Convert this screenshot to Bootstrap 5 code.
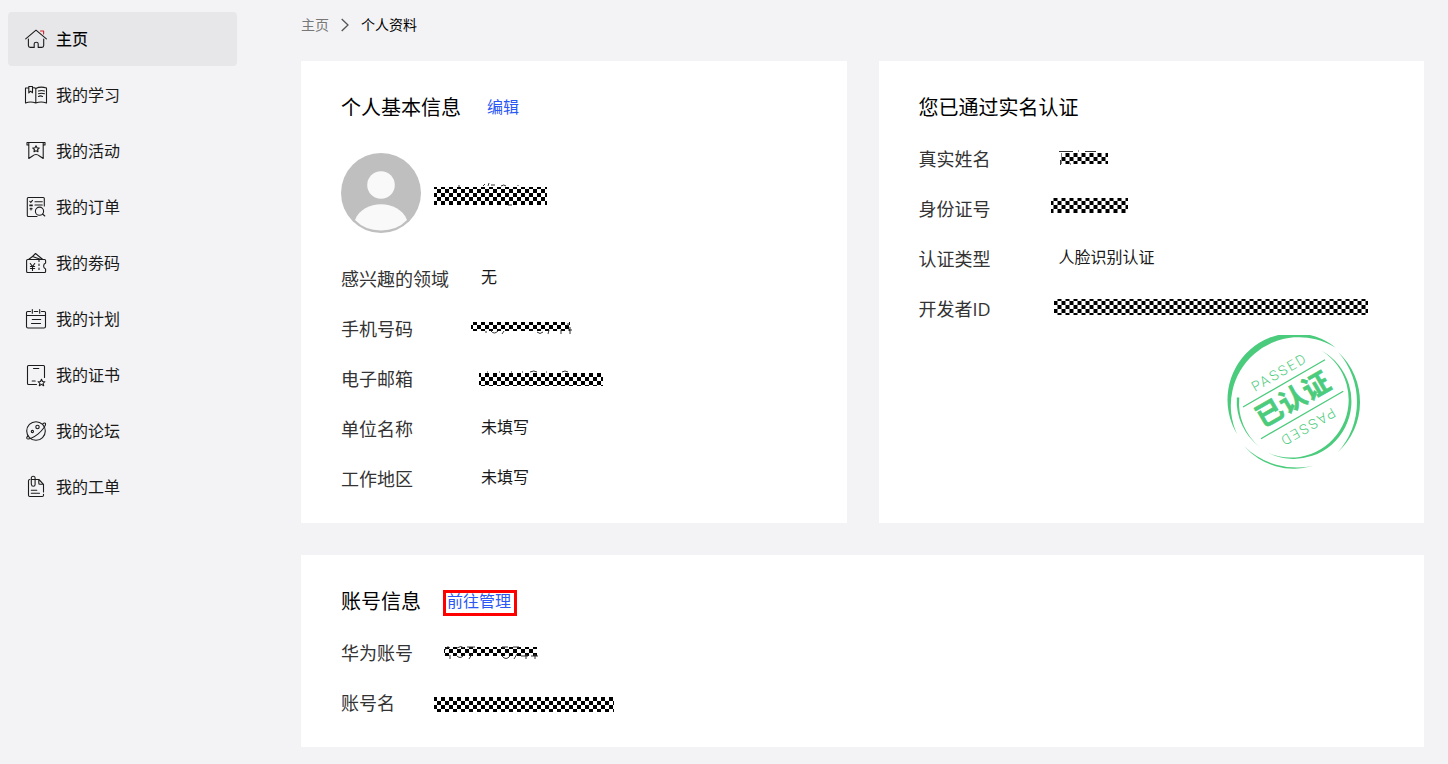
<!DOCTYPE html>
<html lang="zh-CN">
<head>
<meta charset="utf-8">
<meta name="viewport" content="width=device-width, initial-scale=1">
<title>个人资料</title>
<link href="https://cdn.jsdelivr.net/npm/bootstrap@5.3.0/dist/css/bootstrap.min.css" rel="stylesheet">
<style>
body{background:#f3f3f5;color:#000;font-family:"Open Sans","Noto Sans CJK SC",sans-serif;font-size:16px;line-height:24px}
a{text-decoration:none}
.side-menu{width:229px;margin-left:8px;padding-top:12px}
.side-menu .nav{gap:2px}
.side-menu .nav-link{height:54px;padding:0 16px;gap:8px;color:#191919;border-radius:4px}
.side-menu .nav-link.active{background:#e7e7e9;color:#000;-webkit-text-stroke:.15px #000}
.side-menu svg{width:24px;height:24px;fill:none;stroke:#1c1c1c;stroke-width:1.1;stroke-linejoin:round;stroke-linecap:round;flex:none}
.content-area{margin-left:64px;padding:13px 24px 16px 0}
.crumbs{font-size:14px;gap:12px;margin-bottom:24px}
.crumbs a{color:#777}
.crumbs svg{width:8px;height:14px;fill:none;stroke:#555;stroke-width:1.3}
.panels{--bs-gutter-x:32px;--bs-gutter-y:32px}
.panel{height:100%;background:#fff;padding:30px 40px 19px}
.panel h2{font-family:"Noto Sans CJK SC",sans-serif;font-size:20px;line-height:32px;font-weight:400;margin:0}
.panel a{color:#2b57f5}
.panel-head{gap:26px}
.boxed-link{border:3px solid #f00;line-height:16px;padding:0 3px 4px 1px;margin:4px 0 0 -4px}
.profile{gap:13px;margin:30px 0 21px}
.profile svg.face{width:80px;height:80px}
.info{margin:11px 0 0}
.profile + .info{margin-top:0}
.info-row{height:50px}
.info-row dt{width:140px;font-size:18px;font-weight:400;color:#333}
.info-row dd{margin:0;height:26px;line-height:22px;color:#191919}
.narrow .info-row dt{width:106px}
/* checkered covers laid over private values */
.cover{position:absolute;background:repeating-conic-gradient(#fff 0 25%,#000 0 50%) 1px 1px/8px 8px fixed}
.cover svg{position:absolute;left:0;top:-5px;width:100%;height:26px;overflow:visible;fill:none;stroke:#333;stroke-width:1}
.cover-nick{left:0;top:34px;width:113px;height:18px}
.cover-phone{left:-10px;top:6px;width:99px;height:9px}
.cover-mail{left:-2px;top:7px;width:124px;height:13px}
.cover-real{left:2px;top:7px;width:47px;height:11px}
.cover-id{left:-8px;top:2px;width:77px;height:15px}
.cover-dev{left:-5px;top:3px;width:314px;height:16px}
.cover-account{left:-3px;top:7px;width:93px;height:9px}
.cover-login{left:-13px;top:7px;width:180px;height:15px}
.nick{width:113px;height:80px}
.stamp{width:134px;height:134px;margin:1px 23px 0 auto;display:block;fill:#4bcb7c}
.stamp .seal-line{stroke:#4bcb7c;stroke-width:1.3}
.stamp .seal-name{font-size:27px;font-weight:700;text-anchor:middle;stroke:#4bcb7c;stroke-width:.6}
.stamp .seal-word{font-family:Roboto,sans-serif;font-size:14px;font-weight:300;letter-spacing:2px;text-anchor:middle}
</style>
</head>
<body>
<div class="d-flex">
<aside class="side-menu flex-shrink-0">
<nav class="nav flex-column" aria-label="个人中心">
<a class="nav-link active d-flex align-items-center" href="#"><svg viewBox="0 0 24 24"><path d="M1.7 11.8 12 3.2l10.4 8.6M4.4 12v6.6q0 1.8 1.8 1.8h4v-3.6q0-1.5 2-1.5t2 1.5v3.6h3.7q1.8 0 1.8-1.8V12"/><path d="M16.5 4h3.1v3" stroke="#d3222d"/></svg>主页</a>
<a class="nav-link d-flex align-items-center" href="#"><svg viewBox="0 0 24 24"><path d="M4.700 5H1.500v15q5-2 10.300 0 5.200-2 10.700 0V5q-6-2-10.700.5V20M8.600 4.500q2 0 3.200 1M4.800 3.500h3.700v6.300L6.600 8.200 4.800 9.800zM14.500 8q3-1 6 0M14.500 10.700q3-1 6 0M14.500 13.400q2-1 4 0"/></svg>我的学习</a>
<a class="nav-link d-flex align-items-center" href="#"><svg viewBox="0 0 24 24"><path d="M4.500 6H3V3.500h18V6h-1.500M4.800 4v15.500L8.500 17q3.500-3 7 0l3.700 2.500V4M12 6.700l1 2 2.200.3-1.600 1.500.4 2.200-2-1-2 1 .4-2.200L8.800 9l2.200-.3z"/></svg>我的活动</a>
<a class="nav-link d-flex align-items-center" href="#"><svg viewBox="0 0 24 24"><path d="M20.300 11V3.500q0-1-1-1h-15q-1 0-1 1v17q0 1 1 1H13M5.800 6.300l1 1 1.700-2M5.800 10h2.500M5.800 10.800h2.500M6 13.800h2.200M7 13v2M11 6.700h7.300M11 10h7.300M18.500 19l2.300 2"/><circle cx="15.500" cy="16.200" r="4.100"/></svg>我的订单</a>
<a class="nav-link d-flex align-items-center" href="#"><svg viewBox="0 0 24 24"><path d="M21.600 12V9.500q0-1-1-1h-17q-1 0-1 1v11q0 1 1 1h17q1 0 1-1V18q-2-.7-2-3t2-3M4.500 8.500l4-3 8.500 3M8.500 5.500l3-3 7 5.700M6.300 12.500l2.200 3 2.200-3M8.500 15.500v4M6.400 15.500h4.200M6.400 17.500h4.200"/><path d="M15 9v12" stroke-dasharray="1.500 2.500"/></svg>我的劵码</a>
<a class="nav-link d-flex align-items-center" href="#"><svg viewBox="0 0 24 24"><path d="M4.500 4.500h-1q-1 0-1 1v14q0 1.500 1.500 1.500h16q1.500 0 1.500-1.500v-14q0-1-1-1h-1M2.500 8.500h19M8.300 2.500v3.700M15.700 2.500v3.700M10.300 4.500h3.400M4.500 4.500h2M17.500 4.500h2M8.300 12.500h8.400M7.500 16.500h9"/></svg>我的计划</a>
<a class="nav-link d-flex align-items-center" href="#"><svg viewBox="0 0 24 24"><path d="M12.500 21.500h-8q-1 0-1-1v-17q0-1 1-1h15q1 0 1 1v11M9.500 5.500h5.300M8.200 18h3M17.500 16.300l1 2.200 2.400.2-1.800 1.600.6 2.400-2.200-1.300-2.200 1.300.6-2.400-1.800-1.600 2.400-.2z"/></svg>我的证书</a>
<a class="nav-link d-flex align-items-center" href="#"><svg viewBox="0 0 24 24"><circle cx="12" cy="12" r="9.300"/><circle cx="13.500" cy="8" r="1.700"/><circle cx="8.400" cy="12.500" r="1.100"/><path d="M18.700 5q2.200-1.500 2.700-.7c1 1.800-3 7.200-7.500 10.800S4 21 2.900 19.500q-.6-1 .8-2.500"/></svg>我的论坛</a>
<a class="nav-link d-flex align-items-center" href="#"><svg viewBox="0 0 24 24"><path d="M5.800 4.500q-1.300 0-1.300 1.300v14.500q0 1.200 1.200 1.200h12.600q1.200 0 1.200-1.200v-1M19.500 17V9.300l-4.600-4.800h-7M14.800 4.500v3.700q0 1 1 1h3.600M7.300 9V3.400q0-2.200 1.900-2.200t1.900 2.200v6q0 1.800-1.800 1.800T7.500 9.400M7.300 15.300h5.500M7.300 18.300h8.200"/></svg>我的工单</a>
</nav>
</aside>
<main class="content-area flex-grow-1">
<nav class="crumbs d-flex align-items-center" aria-label="面包屑"><a href="#">主页</a><svg viewBox="0 0 8 14" aria-hidden="true"><path d="m.7 1 6.300 6-6.300 6"/></svg><span aria-current="page">个人资料</span></nav>
<div class="row panels">
<div class="col-6"><section class="panel">
<div class="panel-head d-flex align-items-center"><h2>个人基本信息</h2><a href="#">编辑</a></div>
<div class="profile d-flex">
<svg class="face" viewBox="0 0 80 80" role="img" aria-label="头像"><circle cx="40" cy="40" r="40" fill="#bfbfbf"/><circle cx="40" cy="32" r="13.800" fill="#f9f9f9"/><path d="M14 67C22 46 58 46 66 67Q56 77.500 40 77.500T14 67z" fill="#f9f9f9"/></svg>
<div class="nick position-relative"><span class="cover cover-nick"><svg><path d="M24 4h2M49 4l2-2M54 4l1-3M57 3h4M67 4q3-2 5 0M84 4v-1M74 23h4"/></svg></span></div>
</div>
<dl class="info">
<div class="info-row d-flex align-items-center"><dt>感兴趣的领域</dt><dd>无</dd></div>
<div class="info-row d-flex align-items-center"><dt>手机号码</dt><dd class="position-relative"><span class="cover cover-phone"><svg><path d="M15 14v2M20 14q3 4 7 0M33 14l-2 3M66 15q3 3 6 0M78 13l-1 4M90 13v4M97 6v3M97 13h4M99 10v7"/></svg></span></dd></div>
<div class="info-row d-flex align-items-center"><dt>电子邮箱</dt><dd class="position-relative"><span class="cover cover-mail"><svg><path d="M8 4h1M20 4h1M32 4h1M43 4h1M51 4q4-2 7 0M67 4h1M83 4q3-2 6 0"/></svg></span></dd></div>
<div class="info-row d-flex align-items-center"><dt>单位名称</dt><dd>未填写</dd></div>
<div class="info-row d-flex align-items-center"><dt>工作地区</dt><dd>未填写</dd></div>
</dl>
</section></div>
<div class="col-6"><section class="panel">
<h2>您已通过实名认证</h2>
<dl class="info">
<div class="info-row d-flex align-items-center"><dt>真实姓名</dt><dd class="position-relative"><span class="cover cover-real"><svg><path d="M-2 3.500h14M17 3h1M24 3.500h11M-.5 12v5M9 16h1"/></svg></span></dd></div>
<div class="info-row d-flex align-items-center"><dt>身份证号</dt><dd class="position-relative"><span class="cover cover-id"></span></dd></div>
<div class="info-row d-flex align-items-center"><dt>认证类型</dt><dd>人脸识别认证</dd></div>
<div class="info-row d-flex align-items-center"><dt>开发者ID</dt><dd class="position-relative"><span class="cover cover-dev"></span></dd></div>
</dl>
<svg class="stamp" viewBox="0 0 134 134" role="img" aria-label="已认证">
<path d="M10 99A66.600 66.600 0 0 1 108.700 12.700A68.400 68.400 0 0 0 10 99z"/>
<path d="M111.300 17.300A67.800 67.800 0 0 1 110.700 117.300A75.300 75.300 0 0 0 111.300 17.300z"/>
<path d="M17 111A66 66 0 0 0 86.300 130.700A75 75 0 0 1 17 111z"/>
<path d="M9.800 62.500A58 58 0 0 0 33 112.300A57 57 0 0 1 12.300 62.500z"/>
<path d="M94.700 15.700A57.700 57.700 0 0 1 42 118.300A57.900 57.900 0 0 0 94.700 15.700z"/>
<path class="seal-line" d="M16 72 98 24.700M34 103.700l82.300-47.400"/>
<text class="seal-name" transform="translate(65.500 64) rotate(-30)" y="10">已认证</text>
<text class="seal-word" transform="translate(51.500 37.700) rotate(-30)" x="1" y="5">PASSED</text>
<text class="seal-word" transform="translate(81.300 91.700) rotate(150)" x="1" y="5">PASSED</text>
</svg>
</section></div>
<div class="col-12"><section class="panel">
<div class="panel-head d-flex align-items-center"><h2>账号信息</h2><a class="boxed-link" href="#">前往管理</a></div>
<dl class="info narrow">
<div class="info-row d-flex align-items-center"><dt>华为账号</dt><dd class="position-relative"><span class="cover cover-account"><svg><path d="M1 8q2-5 5-2M6 13v4M13 6q4-3 7 0M12 13q4 5 8 0M23 5h8M28 12l-3 5M58 5h6M58 14q4 5 8 0M69 5h6M73 12l-3 5M77 14h7M82 12v5M87 14h7M91 12v5"/></svg></span></dd></div>
<div class="info-row d-flex align-items-center"><dt>账号名</dt><dd class="position-relative"><span class="cover cover-login"></span></dd></div>
</dl>
</section></div>
</div>
</main>
</div>
<script src="https://cdn.jsdelivr.net/npm/bootstrap@5.3.0/dist/js/bootstrap.bundle.min.js"></script>
</body>
</html>
